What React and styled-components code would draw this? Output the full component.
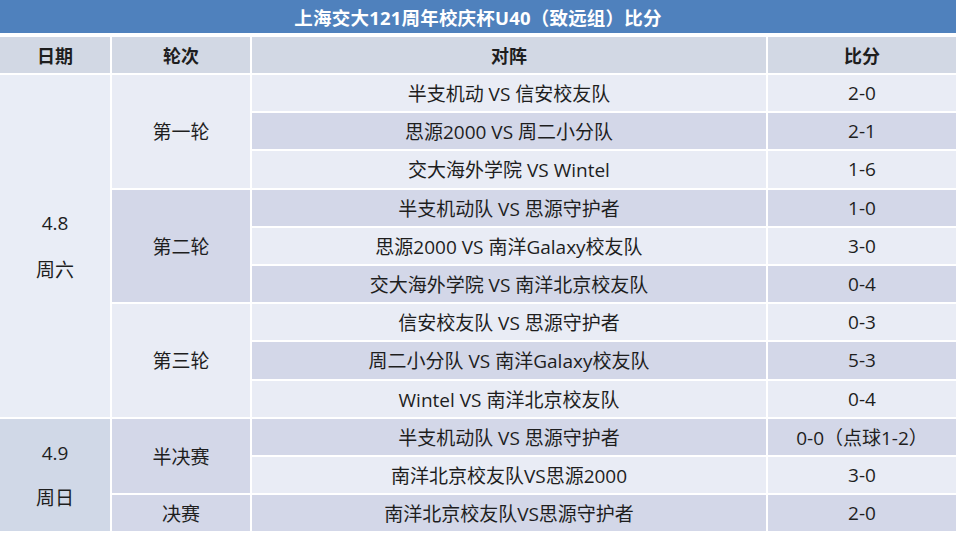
import React from "react";
import styled, { createGlobalStyle } from "styled-components";

const GlobalStyle = createGlobalStyle`
    html, body {
        margin: 0;
        padding: 0;
        background: #ffffff;
    }
    body {
        font-family: "Open Sans", "Noto Sans CJK SC", sans-serif;
        color: #1e1e1e;
    }
`;

const Page = styled.div`
    width: 956px;
    height: 540px;
    display: flex;
    flex-direction: column;
`;

const Title = styled.div`
    height: 33px;
    background: #4f81bd;
    color: #ffffff;
    font-size: 18.5px;
    font-weight: 700;
    display: flex;
    align-items: center;
    justify-content: center;
    letter-spacing: 0.2px;
`;

const Table = styled.div`
    margin-top: 4px;
    display: grid;
    grid-template-columns: 110px 138px 514px 188px;
    grid-template-rows: 36px repeat(12, 36.2px);
    gap: 2px;
    background: #ffffff;
`;

const HeadCell = styled.div`
    background: #d2d8e4;
    font-size: 18px;
    font-weight: 700;
    display: flex;
    align-items: center;
    justify-content: center;
`;

const Cell = styled.div`
    background: ${(props) => (props.dark ? "#d3d7e8" : "#e9ecf5")};
    grid-row: span ${(props) => props.span || 1};
    font-size: 19px;
    display: flex;
    flex-direction: column;
    align-items: center;
    justify-content: center;
    white-space: nowrap;
`;

const GameCell = styled(Cell)`
    grid-column: ${(props) => props.col};
    grid-row: ${(props) => props.row};
`;

const DateCell = styled(Cell)`
    background: ${(props) => (props.dark ? "#d0d8e7" : "#e9edf6")};
    line-height: ${(props) => props.gap}px;
    padding-top: 2px;
`;

const rounds = [
    {
        date: "4.8",
        day: "周六",
        gap: 47,
        dark: false,
        groups: [
            {
                name: "第一轮",
                dark: false,
                games: [
                    ["半支机动 VS 信安校友队", "2-0"],
                    ["思源2000 VS 周二小分队", "2-1"],
                    ["交大海外学院 VS Wintel", "1-6"],
                ],
            },
            {
                name: "第二轮",
                dark: true,
                games: [
                    ["半支机动队 VS 思源守护者", "1-0"],
                    ["思源2000 VS 南洋Galaxy校友队", "3-0"],
                    ["交大海外学院 VS 南洋北京校友队", "0-4"],
                ],
            },
            {
                name: "第三轮",
                dark: false,
                games: [
                    ["信安校友队 VS 思源守护者", "0-3"],
                    ["周二小分队 VS 南洋Galaxy校友队", "5-3"],
                    ["Wintel VS 南洋北京校友队", "0-4"],
                ],
            },
        ],
    },
    {
        date: "4.9",
        day: "周日",
        gap: 45,
        dark: true,
        groups: [
            {
                name: "半决赛",
                dark: true,
                games: [
                    ["半支机动队 VS 思源守护者", "0-0（点球1-2）"],
                    ["南洋北京校友队VS思源2000", "3-0"],
                ],
            },
            {
                name: "决赛",
                dark: true,
                games: [["南洋北京校友队VS思源守护者", "2-0"]],
            },
        ],
    },
];

const App = () => {
    let row = 0;
    const cells = [];
    rounds.forEach((day) => {
        const total = day.groups.reduce((n, g) => n + g.games.length, 0);
        cells.push(
            <DateCell key={day.date} span={total} dark={day.dark} gap={day.gap}>
                <span>{day.date}</span>
                <span>{day.day}</span>
            </DateCell>
        );
        day.groups.forEach((group) => {
            cells.push(
                <Cell key={day.date + group.name} span={group.games.length} dark={group.dark}>
                    {group.name}
                </Cell>
            );
            group.games.forEach((game) => {
                const dark = row % 2 === 1;
                cells.push(
                    <GameCell key={"m" + row} dark={dark} col={3} row={row + 2}>
                        {game[0]}
                    </GameCell>,
                    <GameCell key={"s" + row} dark={dark} col={4} row={row + 2}>
                        {game[1]}
                    </GameCell>
                );
                row += 1;
            });
        });
    });

    return (
        <Page>
            <GlobalStyle />
            <Title>上海交大121周年校庆杯U40（致远组）比分</Title>
            <Table>
                <HeadCell>日期</HeadCell>
                <HeadCell>轮次</HeadCell>
                <HeadCell>对阵</HeadCell>
                <HeadCell>比分</HeadCell>
                {cells}
            </Table>
        </Page>
    );
};

export default App;
